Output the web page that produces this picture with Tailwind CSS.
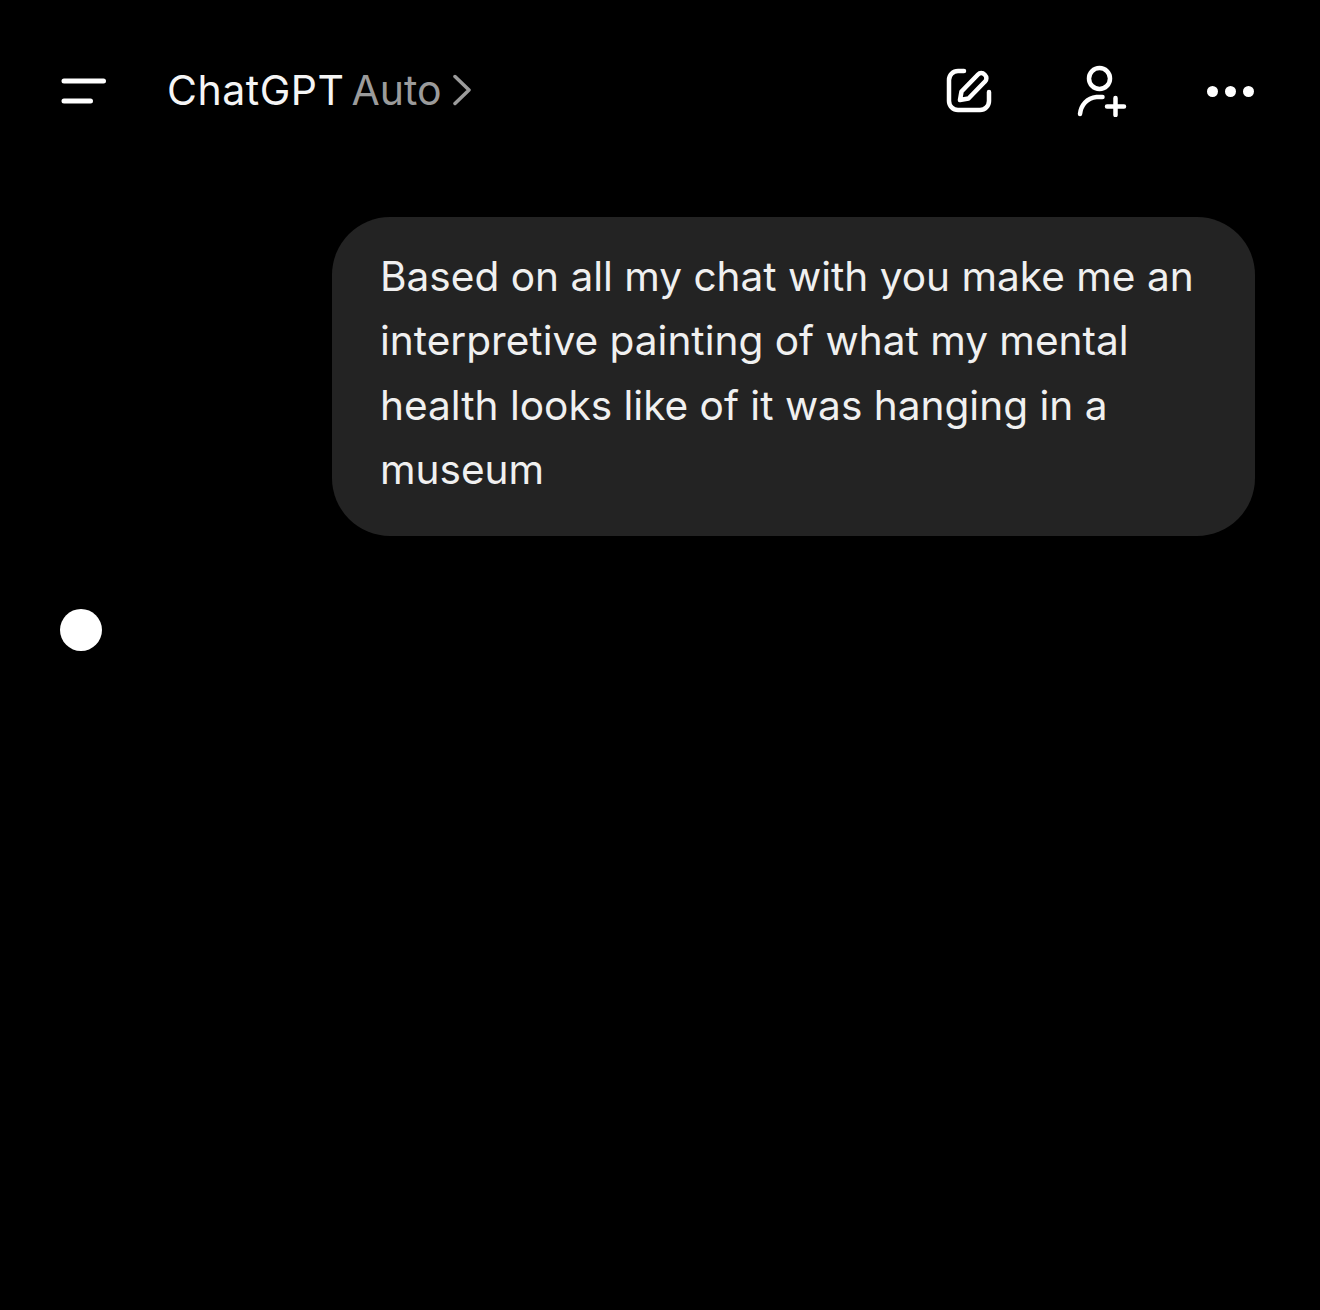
<!DOCTYPE html>
<html>
<head>
<meta charset="utf-8">
<script src="https://cdn.jsdelivr.net/npm/@tailwindcss/browser@4"></script>
</head>
<body class="bg-black">
<div class="w-[1320px] h-[1310px] bg-black font-['Inter',sans-serif] flex flex-col">
  <header class="flex items-center h-[180px] pl-[60px] pr-[66px]">
    <svg class="w-[46px] h-[28px] mr-[61px] mt-[1px]" viewBox="0 0 46 28" fill="none" stroke="#fff" stroke-width="5" stroke-linecap="round"><path d="M4 4h39.500M4 24h26.500"/></svg>
    <div class="flex items-center text-[41px] leading-none">
      <span class="text-[#f5f5f5] tracking-[0.500px]">ChatGPT</span>
      <span class="text-[#9b9b9b] ml-[7px]">Auto</span>
      <svg class="w-[18px] h-[32px] ml-[11px]" viewBox="0 0 18 32" fill="none" stroke="#9b9b9b" stroke-width="3.500" stroke-linecap="round" stroke-linejoin="round"><path d="M2 2.500 16 16 2 29.500"/></svg>
    </div>
    <div class="ml-auto flex items-center">
      <svg class="w-[48px] h-[48px] mt-[2px]" viewBox="0 0 48 48" fill="none" stroke="#fff" stroke-width="4.500" stroke-linecap="round" stroke-linejoin="round"><path d="M19 4H13a9 9 0 0 0-9 9v21a9 9 0 0 0 9 9h22a9 9 0 0 0 9-9v-9"/><path d="M15 33l1.500-8.500L33 7.500a4.500 4.500 0 0 1 6.500 0l.5.500a4.500 4.500 0 0 1 0 6.500L23.500 31.500z"/></svg>
      <svg class="w-[50px] h-[52px] ml-[84px] mt-[1px]" viewBox="0 0 50 52" fill="none" stroke="#fff" stroke-width="4.500" stroke-linecap="round"><circle cx="22.500" cy="13.500" r="10.500"/><path d="M3 49c1-9 7-16 16.500-17h6"/><path d="M38.500 33v17M30 41.500h17"/></svg>
      <div class="flex gap-[7px] ml-[80px] mt-[2px]">
        <div class="w-[11px] h-[11px] rounded-full bg-white"></div>
        <div class="w-[11px] h-[11px] rounded-full bg-white"></div>
        <div class="w-[11px] h-[11px] rounded-full bg-white"></div>
      </div>
    </div>
  </header>
  <main class="flex flex-col pr-[65px] pl-[60px] pt-[37px]">
    <div class="self-end w-[923px] h-[319px] rounded-[58px] bg-[#232323] pl-[48px] pt-[28px] text-[40.600px] leading-[64.400px] text-[#f0f0f0]">
      <p>Based on all my chat with you make me an</p>
      <p>interpretive painting of what my mental</p>
      <p>health looks like of it was hanging in a</p>
      <p>museum</p>
    </div>
    <div class="mt-[73px] w-[42px] h-[42px] rounded-full bg-white"></div>
  </main>
</div>
</body>
</html>
